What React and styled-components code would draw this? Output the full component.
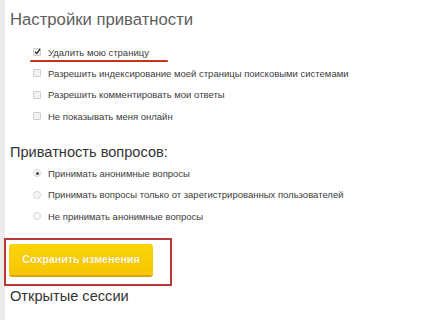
import React from "react";
import styled, { createGlobalStyle } from "styled-components";

const Global = createGlobalStyle`
  html, body { margin: 0; padding: 0; background: #fff; }
  body { font-family: "Liberation Sans", Arial, sans-serif; }
`;

const Page = styled.div`
  display: flex;
  width: 437px;
  height: 320px;
  overflow: hidden;
  background: #fff;
`;

const Strip = styled.div`
  width: 5px;
  flex: none;
  background: #ebebeb;
`;

const Content = styled.div`
  flex: 1;
  padding: 8px 0 0 5px;
  display: flex;
  flex-direction: column;
`;

const Title = styled.h1`
  margin: 0;
  font-weight: normal;
  font-size: 16.7px;
  line-height: 24px;
  color: #5e5e5e;
`;

const SubTitle = styled.h2`
  margin: ${(p) => p.$mt || 0}px 0 0 0;
  font-weight: normal;
  font-size: 14.6px;
  line-height: ${(p) => p.$lh || 22}px;
  color: #333;
`;

const List = styled.div`
  display: flex;
  flex-direction: column;
  padding-left: 23px;
  margin-top: ${(p) => p.$mt}px;
`;

const Row = styled.label`
  display: flex;
  align-items: center;
  gap: 7px;
  height: 21.33px;
  font-size: 9.5px;
  color: #3c3c3c;
  position: relative;
`;

const Box = styled.span`
  width: 6px;
  height: 6px;
  border: 1px solid #cfcfcf;
  border-radius: 1px;
  background: #f2f2f2;
  position: relative;
  flex: none;
`;

const Tick = styled.svg`
  position: absolute;
  left: 0;
  top: -1px;
`;

const Radio = styled.span`
  width: 6px;
  height: 6px;
  border: 1px solid #d6d6d6;
  border-radius: 50%;
  background: #f6f6f6;
  flex: none;
  display: flex;
  align-items: center;
  justify-content: center;
  &::after {
    content: "";
    width: 3px;
    height: 3px;
    border-radius: 50%;
    background: ${(p) => (p.$on ? "#444" : "transparent")};
  }
`;

const Underline = styled.span`
  position: absolute;
  left: -3px;
  top: 19px;
  width: 138px;
  height: 2px;
  background: #c4331f;
  border-radius: 1px;
`;

const Highlight = styled.div`
  margin: 11px 0 0 -6px;
  width: 161px;
  height: 40px;
  border: 2px solid #b8393b;
  display: flex;
  align-items: flex-start;
  padding: 4px 0 0 3px;
  box-sizing: content-box;
`;

const SaveButton = styled.button`
  width: 144px;
  height: 31px;
  border: none;
  border-radius: 3px;
  background: linear-gradient(#fad40a, #f6c600);
  box-shadow: 0 2px 0 #d9a300;
  color: #fffbe6;
  font-family: "Liberation Sans", Arial, sans-serif;
  font-weight: bold;
  font-size: 10.7px;
  text-shadow: 0 0 1px rgba(180, 130, 0, 0.5);
  padding: 0;
`;

const checks = [
  { text: "Удалить мою страницу", on: true, mark: true },
  { text: "Разрешить индексирование моей страницы поисковыми системами" },
  { text: "Разрешить комментировать мои ответы" },
  { text: "Не показывать меня онлайн" },
];

const radios = [
  { text: "Принимать анонимные вопросы", on: true },
  { text: "Принимать вопросы только от зарегистрированных пользователей" },
  { text: "Не принимать анонимные вопросы" },
];

export default function App() {
  return (
    <>
      <Global />
      <Page>
        <Strip />
        <Content>
          <Title>Настройки приватности</Title>
          <List $mt={9.4}>
            {checks.map((c) => (
              <Row key={c.text}>
                <Box>
                  {c.on && (
                    <Tick width="7" height="7" viewBox="0 0 7 7">
                      <path d="M1 3.8 L2.8 5.5 L6 1" fill="none" stroke="#333" strokeWidth="1.3" />
                    </Tick>
                  )}
                </Box>
                {c.text}
                {c.mark && <Underline />}
              </Row>
            ))}
          </List>
          <SubTitle $mt={14}>Приватность вопросов:</SubTitle>
          <List $mt={0}>
            {radios.map((r) => (
              <Row key={r.text}>
                <Radio $on={r.on} />
                {r.text}
              </Row>
            ))}
          </List>
          <Highlight>
            <SaveButton>Сохранить изменения</SaveButton>
          </Highlight>
          <SubTitle $mt={0} $lh={20}>Открытые сессии</SubTitle>
        </Content>
      </Page>
    </>
  );
}
